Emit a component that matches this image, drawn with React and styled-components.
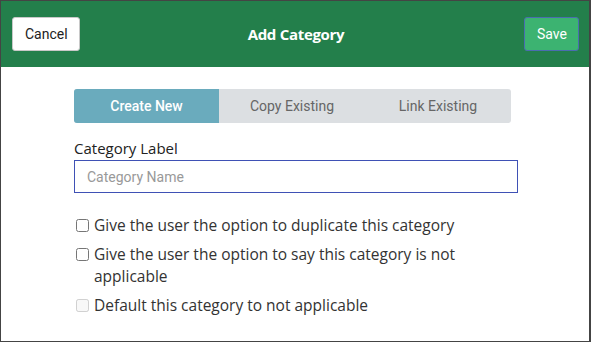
import React, { useState } from 'react';
import styled, { createGlobalStyle } from 'styled-components';

const Global = createGlobalStyle`
    html, body { margin: 0; padding: 0; background: #fff; }
    * { box-sizing: border-box; }
`

function App() {
    const [tab, setTab] = useState('create');
    const tabs = [
        { id: 'create', label: 'Create New' },
        { id: 'copy', label: 'Copy Existing' },
        { id: 'link', label: 'Link Existing' },
    ];
    return (
        <Frame>
            <Global />
            <Header>
                <Cancel>Cancel</Cancel>
                <Title>Add Category</Title>
                <Save>Save</Save>
            </Header>
            <Body>
                <Tabs>
                    {tabs.map(t => (
                        <Tab key={t.id} active={t.id === tab} onClick={() => setTab(t.id)}>
                            {t.label}
                        </Tab>
                    ))}
                </Tabs>
                <Label>Category Label</Label>
                <Input placeholder="Category Name" />
                <Options>
                    <Option>
                        <Box type="checkbox" />
                        <span>Give the user the option to duplicate this category</span>
                    </Option>
                    <Option>
                        <Box type="checkbox" />
                        <span>Give the user the option to say this category is not applicable</span>
                    </Option>
                    <Option>
                        <Box type="checkbox" disabled />
                        <span>Default this category to not applicable</span>
                    </Option>
                </Options>
            </Body>
        </Frame>
    )
}

const Frame = styled.div`
    width: 591px;
    height: 342px;
    border: 1px solid #444;
    border-right-width: 2px;
    display: flex;
    flex-direction: column;
    background: #fff;
    overflow: hidden;
`

const Header = styled.div`
    height: 66px;
    background: #237f4b;
    display: grid;
    grid-template-columns: 1fr auto 1fr;
    align-items: center;
    padding: 0 10px 0 11px;
`

const Btn = styled.button`
    height: 34px;
    border-radius: 3px;
    font-family: Roboto, sans-serif;
    font-size: 14px;
    padding: 0 12px;
    cursor: pointer;
`

const Cancel = styled(Btn)`
    width: 68px;
    justify-self: start;
    background: #fff;
    color: #222;
    border: 1px solid #c8c8c8;
`

const Save = styled(Btn)`
    width: 55px;
    justify-self: end;
    background: #3cb371;
    color: #fff;
    border: 1px solid #4a6cb0;
`

const Title = styled.div`
    font-family: "Open Sans", sans-serif;
    font-weight: 700;
    font-size: 15px;
    color: #fff;
    letter-spacing: -0.3px;
    margin-left: 1px;
`

const Body = styled.div`
    padding: 22px 0 0 73px;
    display: flex;
    flex-direction: column;
`

const Tabs = styled.div`
    width: 437px;
    height: 34px;
    display: grid;
    grid-template-columns: 145px 1fr 1fr;
    background: #dcdfe2;
    border-radius: 3px;
    overflow: hidden;
`

const Tab = styled.div`
    display: flex;
    align-items: center;
    justify-content: center;
    font-family: Roboto, sans-serif;
    font-size: 14px;
    background: ${p => p.active ? '#6aabbd' : 'transparent'};
    color: ${p => p.active ? '#fff' : '#666'};
    font-weight: ${p => p.active ? 500 : 400};
    cursor: pointer;
`

const Label = styled.label`
    margin-top: 15px;
    font-family: "Open Sans", sans-serif;
    font-size: 15px;
    color: #222;
    line-height: 20px;
`

const Input = styled.input`
    margin-top: 2px;
    width: 444px;
    height: 33px;
    border: 1px solid #3f51b5;
    outline: none;
    padding: 0 12px;
    font-family: Roboto, sans-serif;
    font-size: 14px;
    &::placeholder { color: #999; }
`

const Options = styled.div`
    margin-top: 21px;
    display: flex;
    flex-direction: column;
    gap: 7px;
    width: 410px;
`

const Option = styled.label`
    display: flex;
    align-items: flex-start;
    gap: 5px;
    font-family: "Open Sans", sans-serif;
    font-size: 15.5px;
    line-height: 22px;
    color: #333;
`

const Box = styled.input`
    margin: 5px 0 0 2px;
    width: 13px;
    height: 13px;
    flex: none;
`

export default App
